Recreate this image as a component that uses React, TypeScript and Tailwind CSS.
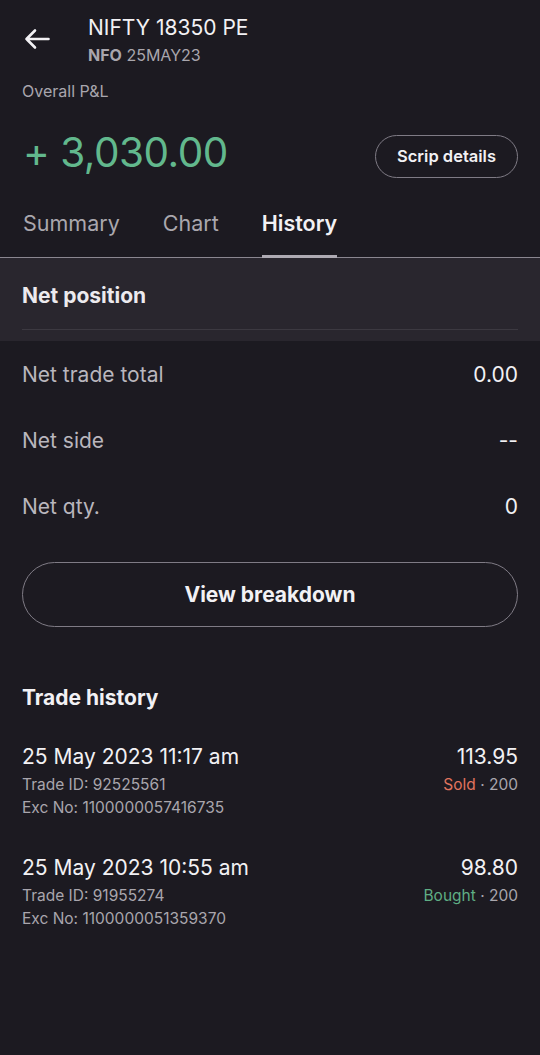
const trades = [
  { time: "25 May 2023 11:17 am", tradeId: "92525561", excNo: "1100000057416735", price: "113.95", side: "Sold", qty: 200 },
  { time: "25 May 2023 10:55 am", tradeId: "91955274", excNo: "1100000051359370", price: "98.80", side: "Bought", qty: 200 },
];

const netRows = [
  { label: "Net trade total", value: "0.00" },
  { label: "Net side", value: "--" },
  { label: "Net qty.", value: "0" },
];

export default function App() {
  return (
    <div className="min-h-[1055px] w-[540px] bg-[#1c1a21] text-white" style={{ fontFamily: "Inter, 'Noto Sans', sans-serif" }}>
      {/* header */}
      <div className="flex items-start pl-[24px] pt-[15px]">
        <svg className="mt-[13px]" width="26" height="22" viewBox="0 0 26 22" fill="none" stroke="#f2f1f4" strokeWidth="2.6" strokeLinecap="round" strokeLinejoin="round">
          <path d="M24.5 11H2.5M11 2.5L2.5 11L11 19.5" />
        </svg>
        <div className="ml-[38px]">
          <div className="text-[21px] leading-[26px] text-[#f2f1f4]">NIFTY 18350 PE</div>
          <div className="mt-[4px] text-[16px] leading-[20px] text-[#a9a6ad]">
            <span className="font-bold">NFO</span> 25MAY23
          </div>
        </div>
      </div>

      <div className="mt-[16px] px-[22px] text-[16px] leading-[20px] text-[#a9a6ad]">Overall P&amp;L</div>

      <div className="mt-[34px] flex h-[43px] items-center justify-between pl-[23px] pr-[22px]">
        <div className="mb-[8px] text-[40.5px] leading-[50px] tracking-[-0.5px] text-[#62b88d]">+ 3,030.00</div>
        <button className="h-[43px] w-[143px] rounded-full border border-[#7f7b85] text-[16.5px] font-semibold text-[#f2f1f4]">
          Scrip details
        </button>
      </div>

      {/* tabs */}
      <div className="mt-[31px] flex gap-[43px] border-b border-[#8a8690] px-[23px]">
        <div className="pb-[20px] text-[21.5px] leading-[28px] text-[#aaa7ae]">Summary</div>
        <div className="pb-[20px] text-[21.5px] leading-[28px] text-[#aaa7ae]">Chart</div>
        <div className="relative pb-[20px] text-[21.5px] font-semibold leading-[28px] text-[#f2f1f4]">
          History
          <div className="absolute bottom-[-1px] left-0 right-0 h-[3px] bg-[#aeaab3]" />
        </div>
      </div>

      {/* net position */}
      <div className="bg-[#29262e] px-[22px]">
        <div className="border-b border-[#3c3941] pb-[18px] pt-[23px] text-[21px] font-bold leading-[30px] text-[#eceaee]">
          Net position
        </div>
        <div className="h-[11px]" />
      </div>

      <div className="px-[22px] pt-[1px]">
        {netRows.map((r) => (
          <div key={r.label} className="flex h-[66px] items-center justify-between text-[21px]">
            <span className="text-[#b9b6bd]">{r.label}</span>
            <span className="text-[#f2f1f4]">{r.value}</span>
          </div>
        ))}

        <button className="mt-[22px] h-[65px] w-full rounded-full border border-[#7f7b85] text-[21px] font-bold text-[#f2f1f4]">
          View breakdown
        </button>

        <div className="mt-[56px] text-[21px] font-bold leading-[30px] text-[#f2f1f4]">Trade history</div>

        <div className="mt-[31px] flex flex-col gap-[37px]">
          {trades.map((t) => (
            <div key={t.tradeId} className="flex justify-between">
              <div>
                <div className="text-[21px] leading-[26px] text-[#f2f1f4]">{t.time}</div>
                <div className="mt-[5px] text-[15.5px] leading-[20px] text-[#a9a6ad]">Trade ID: {t.tradeId}</div>
                <div className="mt-[3px] text-[15.5px] leading-[20px] text-[#a9a6ad]">Exc No: {t.excNo}</div>
              </div>
              <div className="text-right">
                <div className="text-[21px] leading-[26px] text-[#f2f1f4]">{t.price}</div>
                <div className="mt-[5px] text-[15.5px] leading-[20px] text-[#a9a6ad]">
                  <span className={t.side === "Sold" ? "text-[#e0735e]" : "text-[#5fae84]"}>{t.side}</span> · {t.qty}
                </div>
              </div>
            </div>
          ))}
        </div>
      </div>
    </div>
  );
}
